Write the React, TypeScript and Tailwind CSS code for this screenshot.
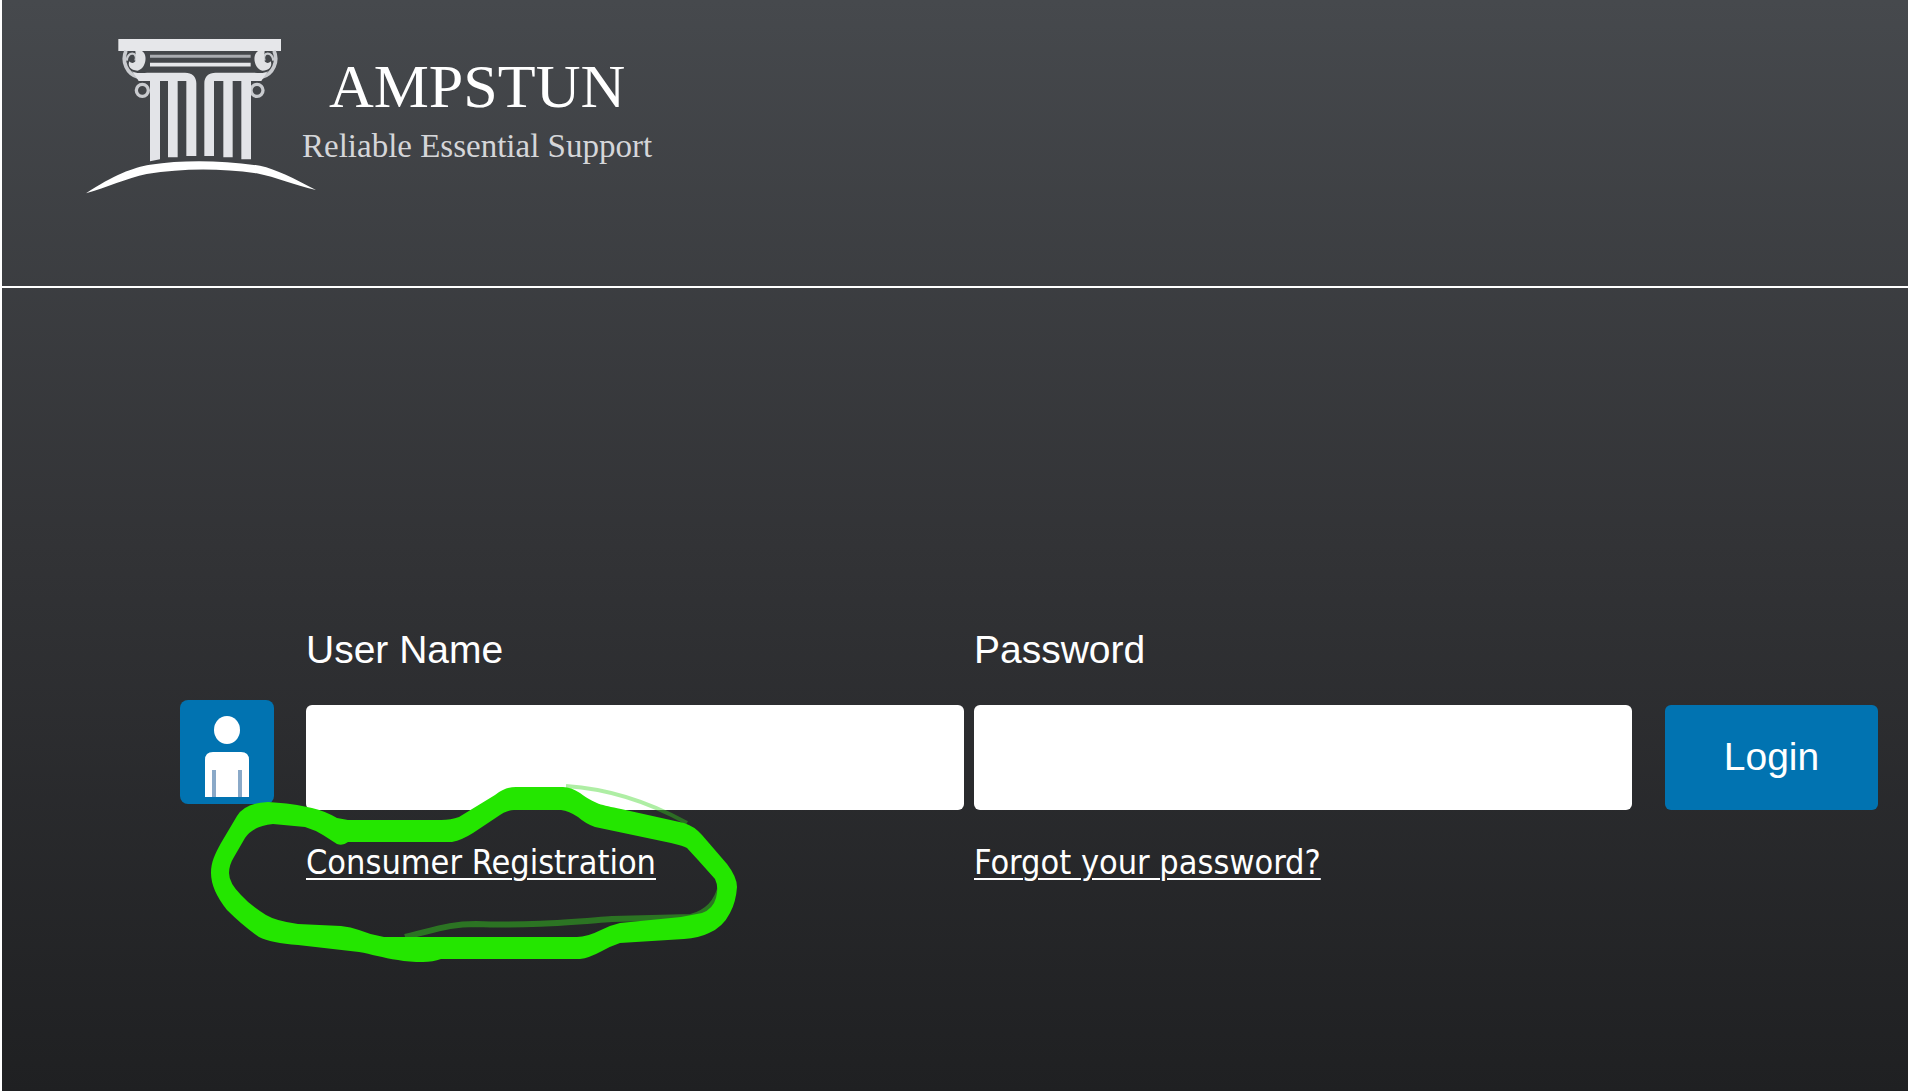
import type { ReactNode } from "react";

function PillarLogo() {
  return (
    <svg
      viewBox="0 0 780 570"
      className="h-[190px] w-[260px] shrink-0"
      aria-hidden="true"
    >
      <rect x="145" y="57" width="488" height="36" fill="#e6e7ea" />
      <g fill="none" stroke="#c9cbcf">
        <path d="M240 109H542" stroke="#a9abb0" strokeWidth="9" />
        <path d="M240 134H542" stroke="#e6e7ea" strokeWidth="11" />
        <path
          d="M168 92C154 124 170 162 205 172M612 92C626 124 610 162 575 172"
          strokeWidth="11"
        />
        <path
          d="M170 122C172 92 206 96 196 122M610 122C608 92 574 96 584 122"
          strokeWidth="7"
        />
        <circle cx="217" cy="211" r="18" strokeWidth="10" />
        <circle cx="561" cy="211" r="18" strokeWidth="10" />
      </g>
      <path
        d="M196 93H216C236 106 226 148 202 152C182 152 172 138 178 124C186 134 200 128 198 112Z"
        fill="#e0e1e4"
      />
      <path
        d="M584 93H564C544 106 554 148 578 152C598 152 608 138 602 124C594 134 580 128 582 112Z"
        fill="#e0e1e4"
      />
      <path
        d="M186 152C196 162 214 158 240 158H345C366 158 379 170 379 190V408H349V183H323V412H294V183H270V418L240 424V183H206Z"
        fill="#e3e4e8"
      />
      <path
        d="M594 152C584 162 566 158 542 158H437C416 158 403 170 403 190V408H432V183H460V412H488V183H514V418H543V183H574Z"
        fill="#e3e4e8"
      />
      <path
        d="M48 520C130 465 190 442 240 434Q390 412 570 437C620 448 670 474 738 510C670 495 620 472 560 460Q390 436 230 462C170 475 110 502 48 520Z"
        fill="#fff"
      />
    </svg>
  );
}

function UserBadge() {
  return (
    <svg
      viewBox="0 0 94 104"
      className="h-[104px] w-[94px] shrink-0 rounded-lg bg-[#0173b1]"
      aria-hidden="true"
    >
      <ellipse cx="47" cy="30" rx="13" ry="14" fill="#fff" />
      <path d="M25 97V60Q25 52 33 52H61Q69 52 69 60V97Z" fill="#fff" />
      <path d="M34 70V97M60 70V97" stroke="#8aa9c8" strokeWidth="4" />
    </svg>
  );
}

// Hand-drawn marker loop around the registration link
function MarkerLoop() {
  return (
    <svg
      viewBox="0 0 560 210"
      className="pointer-events-none absolute top-[65px] left-[-115px] h-[210px] w-[560px]"
      aria-hidden="true"
    >
      <g fill="none" stroke="#35d51c">
        <path d="M375 16Q436 20 496 53" strokeWidth="4" opacity=".4" />
        <path
          d="M214 167C250 158 260 154 285 154C340 156 380 152 421 149L500 147Q525 140 530 115"
          strokeWidth="6"
          opacity=".45"
        />
      </g>
      <path
        fill="#24e600"
        fillRule="evenodd"
        d="M20 103C20 92 24 84 30 73L46 46Q54 33 77 32C95 33 108 35 121 38Q134 41 146 48L157 50H250Q260 50 268 47L304 25Q314 17 325 17H372Q380 17 389 23C404 34 410 35 430 39L493 53Q503 56 511 65L536 94Q546 107 546 117Q545 132 539 143Q532 157 518 163Q508 168 493 169L429 173Q420 176 411 181Q398 188 389 189H250Q242 192 232 192Q218 192 207 190C192 188 180 184 168 182L107 175Q80 173 68 167Q52 156 36 140Q20 120 20 103ZM38 103Q38 95 43 87L54 68Q62 56 82 54L114 57Q124 60 132 65L146 74Q152 76 157 72H261Q271 70 282 63L306 47Q315 40 323 40H370Q378 41 387 47Q395 54 404 57L480 73Q493 76 496 78L507 90L524 109Q528 117 525 128Q522 139 511 143L490 147L429 153Q420 155 410 160Q396 167 386 167H193Q180 165 168 160Q160 157 150 156L107 154Q85 151 75 145Q60 136 50 125Q38 113 38 103Z"
      />
    </svg>
  );
}

interface FieldProps {
  id: string;
  label: string;
  type: string;
  link: string;
  children?: ReactNode;
}

function Field({ id, label, type, link, children }: FieldProps) {
  return (
    <div className="min-w-0 flex-1">
      <label
        htmlFor={id}
        className="block h-[85px] font-['Liberation_Sans_Narrow','Liberation_Sans',sans-serif] text-[39px] leading-[60px] whitespace-nowrap"
      >
        {label}
      </label>
      <div className="relative">
        <input
          id={id}
          type={type}
          className="block h-[105px] w-full rounded-md bg-white px-6 text-4xl text-black outline-none"
        />
        <a
          href="#"
          className="mt-7 inline-block font-['DejaVu_Sans_Condensed','Noto_Sans',sans-serif] text-[34px] leading-[48px] whitespace-nowrap underline decoration-2 underline-offset-4"
        >
          {link}
        </a>
        {children}
      </div>
    </div>
  );
}

export default function App() {
  return (
    <div className="min-h-screen border-l-2 border-white bg-linear-to-b from-[#46494d] via-[#323336] to-[#1f2022] text-white">
      <header className="flex h-[288px] items-start border-b-2 border-white pt-5 pl-[68px]">
        <PillarLogo />
        <div className="-ml-7 pt-7 text-center font-['Liberation_Serif',serif] whitespace-nowrap">
          <div className="text-[62px] leading-[76px]">AMPSTUN</div>
          <div className="text-[33px] leading-[44px] text-[#d5d6d9]">
            Reliable Essential Support
          </div>
        </div>
      </header>

      <main className="pt-[332px] pr-[30px] pl-[178px]">
        <form className="flex" onSubmit={(e) => e.preventDefault()}>
          <div className="mr-8 pt-20">
            <UserBadge />
          </div>
          <div className="flex min-w-0 flex-1 gap-2.5">
            <Field
              id="username"
              label="User Name"
              type="text"
              link="Consumer Registration"
            >
              <MarkerLoop />
            </Field>
            <Field
              id="password"
              label="Password"
              type="password"
              link="Forgot your password?"
            />
          </div>
          <div className="ml-[33px] pt-[85px]">
            <button
              type="submit"
              className="h-[105px] w-[213px] rounded-md bg-[#0173b1] font-['Liberation_Sans_Narrow','Liberation_Sans',sans-serif] text-[39px]"
            >
              Login
            </button>
          </div>
        </form>
      </main>
    </div>
  );
}
